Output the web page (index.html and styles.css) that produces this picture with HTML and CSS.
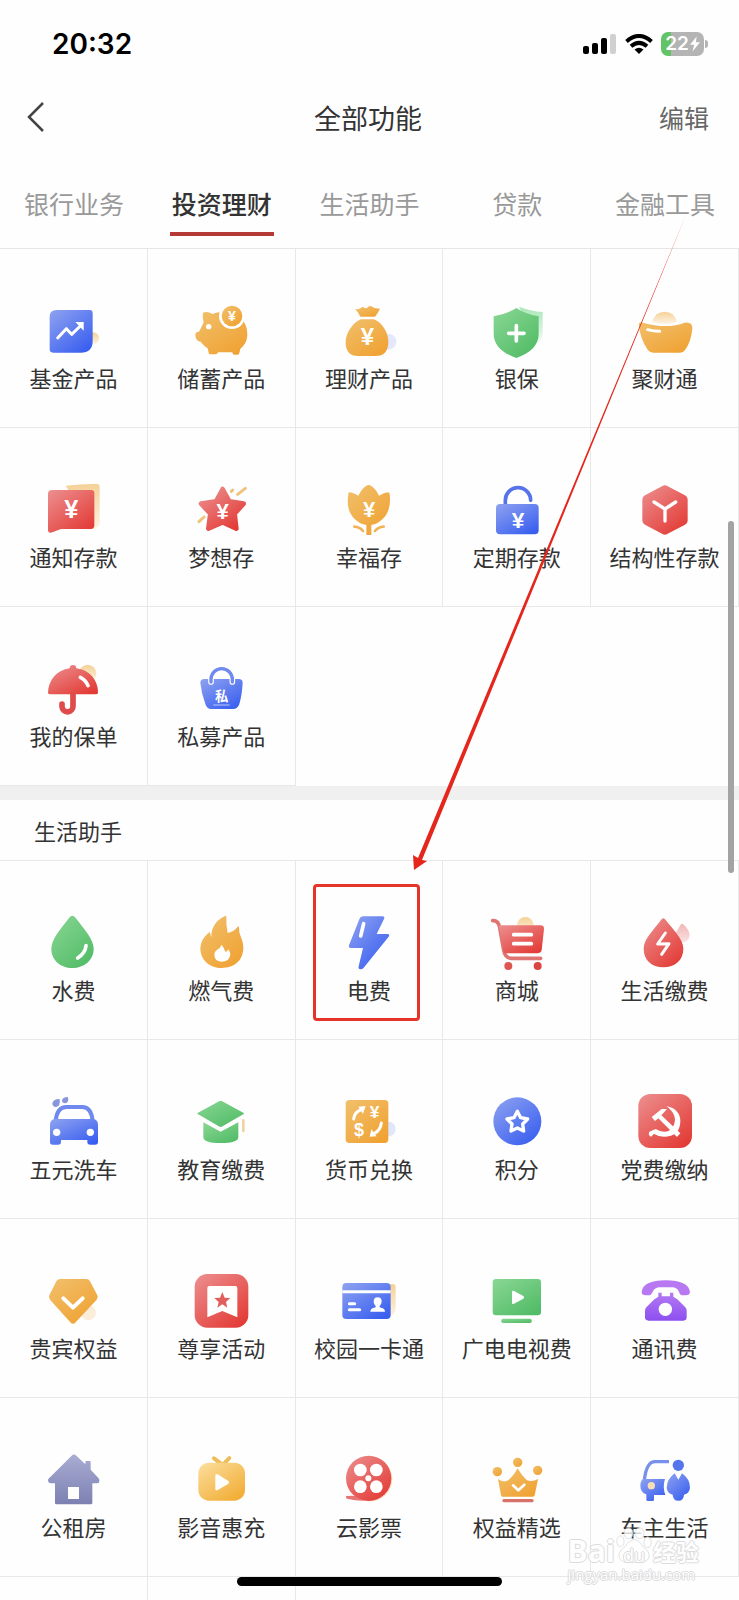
FILE: index.html
```html
<!DOCTYPE html>
<html lang="zh-CN">

<head>
  <meta charset="UTF-8">
  <meta name="viewport" content="width=device-width, initial-scale=1">
  <title>全部功能</title>
  <link rel="stylesheet" href="styles.css">
</head>

<body>
  <!-- shared gradients -->
  <svg class="defs" width="0" height="0" aria-hidden="true">
    <defs>
      <linearGradient id="blue" x1="0" y1="0" x2="0.8" y2="1"><stop offset="0" stop-color="#8fa3f0"/><stop offset="1" stop-color="#3a5ff0"/></linearGradient>
      <linearGradient id="red" x1="0" y1="0" x2="0.8" y2="1"><stop offset="0" stop-color="#ec9090"/><stop offset="1" stop-color="#e33c37"/></linearGradient>
      <linearGradient id="orange" x1="0" y1="0" x2="0.8" y2="1"><stop offset="0" stop-color="#f1c06c"/><stop offset="1" stop-color="#f0a233"/></linearGradient>
      <linearGradient id="green" x1="0" y1="0" x2="0.8" y2="1"><stop offset="0" stop-color="#8ad794"/><stop offset="1" stop-color="#52bc67"/></linearGradient>
      <linearGradient id="purple" x1="0" y1="0" x2="0" y2="1"><stop offset="0" stop-color="#b57af3"/><stop offset="1" stop-color="#8c4ff0"/></linearGradient>
      <linearGradient id="slate" x1="0" y1="0" x2="0" y2="1"><stop offset="0" stop-color="#a9acd2"/><stop offset="1" stop-color="#7c81b2"/></linearGradient>
      <linearGradient id="yellow" x1="0" y1="0" x2="0.8" y2="1"><stop offset="0" stop-color="#fbdf9f"/><stop offset="1" stop-color="#f2ad35"/></linearGradient>
      <linearGradient id="sand" x1="0" y1="0" x2="0" y2="1"><stop offset="0" stop-color="#f5d196"/><stop offset="1" stop-color="#fdf3e2"/></linearGradient>
      <linearGradient id="mint" x1="0" y1="0" x2="0" y2="1"><stop offset="0" stop-color="#a9e6b8"/><stop offset="1" stop-color="#f0fbf2"/></linearGradient>
      <linearGradient id="pink" x1="0" y1="0" x2="0" y2="1"><stop offset="0" stop-color="#f1b5b5"/><stop offset="1" stop-color="#fbe4e4"/></linearGradient>
    </defs>
  </svg>

  <div class="app">
    <div class="status-bar">
      <span class="time">20:32</span>
      <div class="status-icons">
        <svg width="34" height="20" viewBox="0 0 34 20" aria-hidden="true">
          <rect x="0" y="12" width="6" height="8" rx="2"/>
          <rect x="9" y="9" width="6" height="11" rx="2"/>
          <rect x="18" y="4" width="6" height="16" rx="2"/>
          <rect x="27" y="0" width="6" height="20" rx="2" fill="#d0d0d0"/>
        </svg>
        <svg width="28" height="20" viewBox="0 0 28 20" fill="none" stroke="#000" stroke-width="4" aria-hidden="true">
          <path d="M1.500 7.500Q14-3.500 26.500 7.500"/>
          <path d="M6 12.200Q14 5.500 22 12.200"/>
          <path d="M9.500 15.500Q14 12 18.500 15.500L14 20Z" fill="#000" stroke="none"/>
        </svg>
        <div class="battery">
          <span>22</span>
          <svg width="10" height="16" viewBox="0 0 12 18" fill="#fff" aria-hidden="true"><path d="M8 0L0 10H5L3 18L12 7H7Z"/></svg>
        </div>
      </div>
    </div>

    <header class="nav-bar">
      <button class="back" type="button" aria-label="返回">
        <svg width="18" height="32" viewBox="0 0 18 32" fill="none" stroke="#444" stroke-width="2.500"><path d="M16 2L2 16L16 30"/></svg>
      </button>
      <h1>全部功能</h1>
      <button class="edit" type="button">编辑</button>
    </header>

    <nav class="tabs">
      <a href="#">银行业务</a>
      <a href="#" class="active">投资理财</a>
      <a href="#">生活助手</a>
      <a href="#">贷款</a>
      <a href="#">金融工具</a>
    </nav>

    <main class="content">
      <section class="grid">
        <a class="item" href="#">
          <svg class="icon" viewBox="0 0 180 180"><circle cx="150" cy="109" r="18" fill="url(#sand)"/><path d="M40 24H140Q149 24 149 33V116Q149 152 113 152H30Q20 152 20 142V44Q20 24 40 24Z" fill="url(#blue)"/><path d="M44 108L70 80L86 97L112 72" class="line w9"/><path d="M97 60H122V86Z" fill="#fff"/></svg>
          <span>基金产品</span>
        </a>
        <a class="item" href="#">
          <svg class="icon" viewBox="0 0 180 180"><path d="M36 32Q50 27 64 36Q78 30 92 30C150 28 170 66 169 98C168 120 158 132 148 140L145 153Q144 158 139 158H129Q125 158 124 151H82L79 154Q78 157 74 157H58Q53 157 53 152L50 139C40 132 34 126 30 120L20 116Q12 108 13 98Q14 88 24 89C28 82 32 72 38 62Q33 45 36 32Z" fill="url(#orange)"/><circle cx="53" cy="74" r="8" fill="#fff"/><circle cx="123" cy="42" r="39" fill="#fff"/><circle cx="123" cy="42" r="31" fill="url(#orange)"/><text x="123" y="57" font-size="42">¥</text></svg>
          <span>储蓄产品</span>
        </a>
        <a class="item" href="#">
          <svg class="icon" viewBox="0 0 180 180"><circle cx="148" cy="119" r="24" fill="#e3e8fd"/><path d="M66 52H104C130 60 150 96 148 122C147 148 134 162 110 162H58C34 162 20 148 20 122C19 96 40 62 66 52Z" fill="url(#orange)"/><path d="M48 20Q57 24 64 19L72 14Q78 20 84 18Q90 10 97 13L106 18L123 20Q116 35 108 44H64Q59 32 48 20Z" fill="url(#orange)"/><text x="85" y="130" font-size="72">¥</text></svg>
          <span>理财产品</span>
        </a>
        <a class="item" href="#">
          <svg class="icon" viewBox="0 0 180 180"><path d="M96 14Q130 27 167 30V88Q167 112 152 124Z" fill="url(#mint)"/><path d="M88 18Q115 36 155 43V95C155 130 130 153 88 168C46 153 20 130 20 95V43Q61 36 88 18Z" fill="url(#green)"/><path d="M88 71V117M65 94H111" class="line w11"/></svg>
          <span>银保</span>
        </a>
        <a class="item" href="#">
          <svg class="icon" viewBox="0 0 180 180"><path d="M52 60Q60 29 89 29Q118 29 126 60Q90 70 52 60Z" fill="url(#sand)"/><path d="M11 66Q13 59 24 62Q60 72 90 72Q125 72 148 62Q173 58 172 80Q168 120 150 144Q145 152 135 152H55Q45 152 38 143Q15 110 11 66Z" fill="url(#orange)"/><path d="M38 83Q55 88 74 88" class="line w9"/></svg>
          <span>聚财通</span>
        </a>

        <a class="item" href="#">
          <svg class="icon" viewBox="0 0 180 180"><path d="M68 14Q120 8 162 9Q170 9 170 18V130Q160 144 150 144Z" fill="url(#sand)"/><path d="M27 27H144Q154 27 154 37V133Q154 144 144 144H54L28 154Q15 158 15 146V39Q15 27 27 27Z" fill="url(#red)"/><text x="85" y="111" font-size="76">¥</text></svg>
          <span>通知存款</span>
        </a>
        <a class="item" href="#">
          <svg class="icon" viewBox="0 0 180 180"><path d="M163 22L140 40M125 27L121 31M39 108L24 122" fill="none" stroke="#eec47c" stroke-width="9" stroke-linecap="round"/><path d="M95 24L115 61L158 68L131 98L136 143L95 124L52 143L58 98L30 68L75 61Z" fill="url(#red)" stroke="url(#red)" stroke-width="14" stroke-linejoin="round"/><text x="95" y="114" font-size="66">¥</text></svg>
          <span>梦想存</span>
        </a>
        <a class="item" href="#">
          <svg class="icon" viewBox="0 0 180 180"><path d="M28 39Q27 34 34 34Q46 36 58 44Q70 20 85 13Q89 11 93 13Q110 22 120 44Q132 36 146 34Q152 34 152 39Q158 90 130 115Q115 130 97 132V162H82V132Q63 130 48 115Q20 90 28 39Z" fill="url(#orange)"/><path d="M46 137Q62 138 72 150M134 137Q118 138 108 150" fill="none" stroke="#f0b355" stroke-width="8" stroke-linecap="round"/><text x="90" y="107" font-size="66">¥</text></svg>
          <span>幸福存</span>
        </a>
        <a class="item" href="#">
          <svg class="icon" viewBox="0 0 180 180"><path d="M55 75V58A38 38 0 0 1 131 58" fill="none" stroke="#5773ea" stroke-width="11" stroke-linecap="round"/><rect x="27" y="69" width="128" height="91" rx="12" fill="url(#blue)"/><text x="93" y="140" font-size="68">¥</text></svg>
          <span>定期存款</span>
        </a>
        <a class="item" href="#">
          <svg class="icon" viewBox="0 0 180 180"><path d="M81 16Q90 10 98 16L150 43Q158 47 158 55V119Q158 127 150 131L98 158Q90 164 81 158L30 131Q22 127 22 119V55Q22 47 30 43Z" fill="url(#red)"/><path d="M57 63L90 84L122 63M90 84V120" class="line w10"/></svg>
          <span>结构性存款</span>
        </a>

        <a class="item" href="#">
          <svg class="icon" viewBox="0 0 180 180"><circle cx="134" cy="40" r="26" fill="url(#sand)"/><path d="M90 100V138A16 16 0 0 1 57 140V132" fill="none" stroke="#df4b4a" stroke-width="17" stroke-linecap="round"/><path d="M80 25Q81 15 90 15Q99 15 100 25C140 30 166 62 165 98Q165 103 158 103H22Q15 103 15 98C16 60 42 30 80 25Z" fill="url(#red)"/><path d="M112 52Q128 60 135 77" class="line w11"/></svg>
          <span>我的保单</span>
        </a>
        <a class="item" href="#">
          <svg class="icon" viewBox="0 0 180 180"><path d="M28 68Q28 57 40 57H143Q155 57 155 68Q153 105 145 132Q140 147 126 147H60Q48 147 43 132Q31 100 28 68Z" fill="url(#blue)"/><path d="M60 66V58A32 32 0 0 1 124 58V66" class="line w17"/><path d="M60 66V58A32 32 0 0 1 124 58V66" fill="none" stroke="#6f89ee" stroke-width="10" stroke-linecap="round"/><text class="cjk" x="92" y="122" font-size="40">私</text><path d="M67 135H116" fill="none" stroke="#bcc8fb" stroke-width="3"/></svg>
          <span>私募产品</span>
        </a>
      </section>

      <section class="group">
        <h2>生活助手</h2>
        <div class="grid">
          <a class="item" href="#">
            <svg class="icon" viewBox="0 0 180 180"><path d="M88 5Q93 5 98 12C125 48 152 75 152 105C152 138 124 162 88 162C52 162 25 138 25 105C25 75 52 46 78 12Q83 5 88 5Z" fill="url(#green)"/><path d="M129 95Q127 118 104 132" class="line w11"/></svg>
            <span>水费</span>
          </a>
          <a class="item" href="#">
            <svg class="icon" viewBox="0 0 180 180"><path d="M101 7Q106 3 106 10Q105 35 110 57Q130 52 140 38Q144 34 144 42Q144 58 150 70Q157 85 157 100C157 140 130 162 92 162C55 162 28 138 28 102Q30 75 52 57Q57 52 58 60L61 71C60 42 74 20 101 7Z" fill="url(#orange)"/><path d="M92 92Q97 98 103 114Q109 112 112 106Q118 114 118 121Q116 143 93 143Q71 143 70 122Q71 112 80 106Q88 102 92 92Z" fill="#fff"/></svg>
            <span>燃气费</span>
          </a>
          <a class="item" href="#">
            <svg class="icon" viewBox="0 0 180 180"><path d="M73 7H130Q139 7 135 15L113 60H145Q154 60 149 68L74 161Q69 167 61 165Q57 163 59 157L72 102H36Q28 102 30 94L61 16Q64 7 73 7Z" fill="url(#blue)"/><path d="M74 29L65 66" class="line w11"/></svg>
            <span>电费</span>
            <i class="highlight"></i>
          </a>
          <a class="item" href="#">
            <svg class="icon" viewBox="0 0 180 180"><circle cx="115" cy="34" r="25" fill="url(#sand)"/><path d="M17 20Q34 19 38 40L50 108Q54 133 74 133H161" fill="none" stroke="#e07472" stroke-width="11" stroke-linecap="round"/><path d="M35 34H160Q172 34 171 46L164 108Q162 118 150 118H51Z" fill="url(#red)"/><path d="M80 62H133M80 89H133" class="line w11"/><circle cx="64" cy="156" r="12" fill="#df5552"/><circle cx="152" cy="156" r="12" fill="#d94542"/></svg>
            <span>商城</span>
          </a>
          <a class="item" href="#">
            <svg class="icon" viewBox="0 0 180 180"><path d="M138 31Q141 27 145 31Q165 50 164 65Q160 84 140 86L120 60Z" fill="url(#pink)"/><path d="M78 18Q85 8 92 18C115 48 145 75 145 104C145 138 120 160 85 160C50 160 26 138 26 104C26 75 56 48 78 18Z" fill="url(#red)"/><path d="M91 57L68 90L102 89L80 121" class="line w9"/></svg>
            <span>生活缴费</span>
          </a>

          <a class="item" href="#">
            <svg class="icon" viewBox="0 0 180 180"><path d="M28 31Q31 18 50 18Q53 41 39 42Q28 42 28 31ZM57 22Q60 12 75 12Q78 30 67 31Q57 31 57 22Z" fill="#8796dc"/><path d="M38 84Q42 42 70 42H118Q145 42 149 84" fill="none" stroke="#7089ee" stroke-width="12"/><path d="M36 78H150Q165 80 165 96V147Q165 155 157 155H142Q133 155 133 147V141H54V147Q54 155 45 155H29Q21 155 21 147V96Q21 80 36 78Z" fill="url(#blue)"/><circle cx="41" cy="118" r="11" fill="#fff"/><circle cx="142" cy="118" r="11" fill="#fff"/></svg>
            <span>五元洗车</span>
          </a>
          <a class="item" href="#">
            <svg class="icon" viewBox="0 0 180 180"><path d="M157 82V114" fill="none" stroke="#efd3a0" stroke-width="8" stroke-linecap="round"/><path d="M37 88L89 116L142 88V132Q142 150 89 150Q37 150 37 132Z" fill="url(#green)"/><path d="M83 23Q89 18 95 23L158 57Q166 61 158 66L96 102Q89 107 82 102L20 66Q12 61 20 57Z" fill="url(#green)" stroke="#fff" stroke-width="5"/></svg>
            <span>教育缴费</span>
          </a>
          <a class="item" href="#">
            <svg class="icon" viewBox="0 0 180 180"><circle cx="148" cy="108" r="22" fill="#e0e6fd"/><rect x="20" y="21" width="128" height="129" rx="11" fill="url(#orange)"/><path d="M44 78Q46 58 64 51M127 90Q124 113 106 121" class="line w9"/><path d="M58 41L80 39L72 62ZM113 130L92 131L97 109Z" fill="#fff"/><text x="60" y="130" font-size="54">$</text><text x="107" y="76" font-size="52">¥</text></svg>
            <span>货币兑换</span>
          </a>
          <a class="item" href="#">
            <svg class="icon" viewBox="0 0 180 180"><circle cx="91" cy="85" r="72" fill="url(#blue)"/><path d="M91 55L101 74L122 78L107 93L110 114L91 105L72 114L75 93L60 78L81 74Z" class="line w10"/></svg>
            <span>积分</span>
          </a>
          <a class="item" href="#">
            <svg class="icon" viewBox="0 0 180 180"><rect x="10" y="3" width="161" height="162" rx="36" fill="url(#red)"/><path d="M94 39Q136 48 136 86Q134 129 91 131Q70 131 57 122L48 131Q38 126 43 116L62 108Q95 128 114 101Q132 68 94 39Z" fill="#fff"/><path d="M50 72L80 48H96L79 67L136 121L126 132L70 76L60 84Z" fill="#fff"/></svg>
            <span>党费缴纳</span>
          </a>

          <a class="item" href="#">
            <svg class="icon" viewBox="0 0 180 180"><circle cx="136" cy="122" r="23" fill="#faeedb"/><path d="M52 21H130Q137 21 141 28L163 70Q167 77 161 83L98 151Q90 160 82 151L21 83Q15 77 19 70L40 28Q44 21 52 21Z" fill="url(#orange)"/><path d="M61 79L90 107L119 79" class="line w12"/></svg>
            <span>贵宾权益</span>
          </a>
          <a class="item" href="#">
            <svg class="icon" viewBox="0 0 180 180"><rect x="11" y="6" width="161" height="161" rx="38" fill="url(#red)"/><path d="M55 42H133Q139 42 139 48V136L94 117L49 136V48Q49 42 55 42Z" fill="#fff"/><path d="M94 60L101 77L118 78L105 90L109 107L94 97L79 107L83 90L70 78L87 77Z" fill="#e0605e"/></svg>
            <span>尊享活动</span>
          </a>
          <a class="item" href="#">
            <svg class="icon" viewBox="0 0 180 180"><path d="M150 36H160Q170 36 170 46V110Q168 128 150 134Z" fill="url(#sand)"/><rect x="10" y="33" width="145" height="108" rx="12" fill="url(#blue)"/><path d="M10 59H155" fill="none" stroke="#fff" stroke-width="9"/><path d="M31 95H47M31 113H62" class="line w9"/><path d="M116 76Q128 76 128 89Q127 98 122 102V106Q138 109 138 119H94Q94 109 110 106V102Q105 98 104 89Q104 76 116 76Z" fill="#fff"/></svg>
            <span>校园一卡通</span>
          </a>
          <a class="item" href="#">
            <svg class="icon" viewBox="0 0 180 180"><rect x="17" y="21" width="145" height="109" rx="10" fill="url(#green)"/><path d="M75 60Q75 54 81 57L109 72Q114 76 109 80L81 95Q75 98 75 92Z" fill="#fff"/><rect x="43" y="140" width="91" height="13" rx="5" fill="url(#green)"/></svg>
            <span>广电电视费</span>
          </a>
          <a class="item" href="#">
            <svg class="icon" viewBox="0 0 180 180"><path d="M20 60Q24 25 92 25Q160 25 165 60Q164 70 152 70H140Q134 68 131 58Q126 47 112 46H74Q59 47 54 58Q50 68 44 70H33Q20 70 20 60Z" fill="#b778f2"/><path d="M70 62H80V73H105V62H115V74Q121 77 127 82L151 106Q155 110 155 116V136Q155 146 145 146H41Q30 146 30 136V116Q30 110 34 106L58 82Q64 77 70 74Z" fill="url(#purple)"/><circle cx="91" cy="112" r="20" fill="#fff"/></svg>
            <span>通讯费</span>
          </a>

          <a class="item" href="#">
            <svg class="icon" viewBox="0 0 180 180"><path d="M86 14Q93 7 100 14L127 40V34Q127 30 131 30H139Q143 30 143 34V56L167 82Q172 88 168 95Q165 97 148 97V156Q148 160 144 160H40Q36 160 36 156V97Q22 97 18 95Q12 88 18 82ZM75 108V144H108V108Z" fill="url(#slate)" fill-rule="evenodd"/></svg>
            <span>公租房</span>
          </a>
          <a class="item" href="#">
            <svg class="icon" viewBox="0 0 180 180"><path d="M69 22L90 38M115 21L99 38" fill="none" stroke="#eebd57" stroke-width="12" stroke-linecap="round"/><rect x="22" y="35" width="140" height="114" rx="32" fill="url(#yellow)"/><path d="M73 74Q73 66 80 70L111 89Q117 94 111 99L80 117Q73 121 73 113Z" fill="#fff"/></svg>
            <span>影音惠充</span>
          </a>
          <a class="item" href="#">
            <svg class="icon" viewBox="0 0 180 180"><path d="M22 135Q60 130 90 148Q60 152 24 143Q18 140 22 135Z" fill="#e77472"/><circle cx="93" cy="84" r="67" fill="#f8dfc0"/><circle cx="89" cy="82" r="68" fill="url(#red)"/><g fill="#fff"><circle cx="64" cy="57" r="19"/><circle cx="112" cy="57" r="19"/><circle cx="64" cy="107" r="19"/><circle cx="112" cy="107" r="19"/><circle cx="88" cy="82" r="9"/></g></svg>
            <span>云影票</span>
          </a>
          <a class="item" href="#">
            <svg class="icon" viewBox="0 0 180 180"><g fill="url(#orange)"><circle cx="31" cy="62" r="14"/><circle cx="92" cy="34" r="14"/><circle cx="152" cy="58" r="14"/><path d="M33 84Q50 96 64 88Q78 76 92 52Q106 76 120 88Q136 94 153 84Q148 110 143 133Q142 137 138 137H47Q43 137 42 133Z"/></g><path d="M78 103L94 118L112 101" class="line w8"/><path d="M51 149H135" fill="none" stroke="#d9716b" stroke-width="10" stroke-linecap="round"/></svg>
            <span>权益精选</span>
          </a>
          <a class="item" href="#">
            <svg class="icon" viewBox="0 0 180 180"><path d="M28 88Q34 34 58 32H102" fill="none" stroke="#7791ea" stroke-width="10"/><path d="M24 84H90Q82 108 91 132H57V146Q57 150 53 150H38Q34 150 34 146V130Q16 124 16 104Q16 90 24 84Z" fill="url(#blue)"/><circle cx="49" cy="104" r="11" fill="#f8dfb8"/><circle cx="130" cy="43" r="17" fill="#5575ec"/><path d="M119 67L130 86L141 67Q165 84 165 110Q164 126 147 131Q146 149 130 149Q114 149 113 131Q96 126 95 110Q96 84 119 67Z" fill="url(#blue)"/></svg>
            <span>车主生活</span>
          </a>

          <div class="item"></div>
          <div class="item"></div>
        </div>
      </section>
    </main>

    <div class="scrollbar"></div>
    <svg class="arrow" viewBox="0 0 280 660" aria-hidden="true"><path d="M276 0L8 643L3 640L4 655L17 646L12 645Z" fill="#e5261c"/></svg>
    <div class="watermark">
      <div class="brand">
        <span>Bai</span>
        <span class="paw">
          <svg width="38" height="42" viewBox="0 0 42 42" fill="#fff" stroke="#d6d6d6" aria-hidden="true"><ellipse cx="6" cy="17" rx="4" ry="6"/><ellipse cx="15" cy="8" rx="5" ry="6"/><ellipse cx="27" cy="8" rx="5" ry="6"/><ellipse cx="36" cy="18" rx="4" ry="6"/><path d="M21 15Q26 15 31 23Q40 29 37 36Q33 42 21 40Q9 42 5 36Q2 29 11 23Q16 15 21 15Z"/></svg>
          <b>du</b>
        </span>
        <span class="cn">经验</span>
      </div>
      <div class="site">jingyan.baidu.com</div>
    </div>
    <div class="home-indicator"></div>
  </div>
</body>

</html>
```
FILE: styles.css
```css
* {
  box-sizing: border-box;
}

body {
  margin: 0;
  background-color: #fefefe;
  color: #333;
  font-family: "Noto Sans CJK SC", sans-serif;
}

a {
  color: inherit;
  text-decoration: none;
}

button {
  padding: 0;
  border: 0;
  background: none;
  font-family: inherit;
}

.defs {
  position: absolute;
}

.app {
  position: relative;
  display: flex;
  flex-direction: column;
  height: 100vh;
  overflow: hidden;
}

/* status bar */
.status-bar {
  display: flex;
  flex: none;
  align-items: center;
  justify-content: space-between;
  height: 88px;
  padding: 0 30px 0 52px;
}

.time {
  color: #000;
  font-family: Inter, sans-serif;
  font-size: 28px;
  font-weight: 600;
}

.status-icons {
  display: flex;
  align-items: center;
  gap: 8px;
}

.battery {
  position: relative;
  display: flex;
  align-items: center;
  justify-content: center;
  gap: 1px;
  width: 43px;
  height: 24px;
  margin-right: 5px;
  border-radius: 7px;
  background: linear-gradient(to right, #62c466 24%, #b4b4b4 24%);
  color: #fff;
  font-family: Inter, sans-serif;
  font-size: 19px;
  font-weight: 600;
  line-height: 24px;
}

.battery::after {
  content: "";
  position: absolute;
  top: 8px;
  right: -4px;
  width: 3px;
  height: 8px;
  border-radius: 0 3px 3px 0;
  background-color: #b4b4b4;
}

/* title */
.nav-bar {
  display: grid;
  flex: none;
  grid-template-columns: 1fr auto 1fr;
  align-items: center;
  height: 58px;
  padding: 0 30px 0 27px;
}

.nav-bar h1 {
  margin: 0;
  font-size: 27px;
  font-weight: 400;
}

.back {
  justify-self: start;
  line-height: 0;
}

.edit {
  justify-self: end;
  color: #666;
  font-size: 25px;
}

/* tabs */
.tabs {
  display: grid;
  flex: none;
  grid-template-columns: repeat(5, 1fr);
  justify-items: center;
  height: 103px;
  padding-top: 34px;
  border-bottom: 1px solid #e6e6e6;
  color: #999;
  font-size: 25px;
  line-height: 46px;
}

.tabs a {
  height: 56px;
  padding: 0 2px;
}

.tabs .active {
  border-bottom: 4px solid #b53a35;
  color: #333;
  font-weight: 500;
}

/* function grid */
.content {
  flex: 1;
  min-height: 0;
  overflow: hidden;
}

.grid {
  display: grid;
  grid-template-columns: repeat(5, 1fr);
  grid-auto-rows: 179px;
}

.item {
  position: relative;
  display: flex;
  flex-direction: column;
  align-items: center;
  padding-top: 53px;
  border-right: 1px solid #e8e8e8;
  border-bottom: 1px solid #e8e8e8;
  font-size: 22px;
  line-height: 30px;
}

.icon {
  flex: none;
  width: 60px;
  height: 60px;
}

.icon text {
  fill: #fff;
  font-family: "Liberation Sans", sans-serif;
  font-weight: 700;
  text-anchor: middle;
}

.icon .cjk {
  font-family: "Noto Sans CJK SC", sans-serif;
}

.line {
  fill: none;
  stroke: #fff;
  stroke-linecap: round;
  stroke-linejoin: round;
}

.w8 { stroke-width: 8px; }
.w9 { stroke-width: 9px; }
.w10 { stroke-width: 10px; }
.w11 { stroke-width: 11px; }
.w12 { stroke-width: 12px; }
.w17 { stroke-width: 17px; }

.group {
  border-top: 14px solid #f0f0f0;
}

.group h2 {
  margin: 0;
  padding: 0 34px;
  border-bottom: 1px solid #e8e8e8;
  font-size: 22px;
  font-weight: 400;
  line-height: 60px;
}

/* overlays */
.highlight {
  position: absolute;
  top: 23px;
  right: 22px;
  bottom: 18px;
  left: 17px;
  border: 3px solid #e5352b;
  border-radius: 4px;
}

.arrow {
  position: absolute;
  top: 215px;
  left: 410px;
  width: 280px;
  height: 660px;
  pointer-events: none;
}

.scrollbar {
  position: absolute;
  top: 521px;
  right: 5px;
  width: 6px;
  height: 352px;
  border-radius: 3px;
  background-color: #a3a3a3;
}

.home-indicator {
  position: absolute;
  bottom: 14px;
  left: 50%;
  width: 265px;
  height: 9px;
  margin-left: -133px;
  border-radius: 5px;
  background-color: #000;
}

.watermark {
  position: absolute;
  right: 40px;
  bottom: 18px;
  color: #fff;
  font-family: "Open Sans", sans-serif;
  opacity: 0.8;
  text-shadow: 1px 0 #d4d4d4, -1px 0 #d4d4d4, 0 1px #d4d4d4, 0 -1px #d4d4d4;
}

.brand {
  display: flex;
  align-items: flex-end;
  font-size: 30px;
  font-weight: 700;
  line-height: 30px;
}

.brand .cn {
  font-family: "Noto Sans CJK SC", sans-serif;
  font-size: 23px;
}

.paw {
  position: relative;
  height: 42px;
}

.paw b {
  position: absolute;
  right: 0;
  bottom: 2px;
  left: 0;
  font-size: 18px;
  font-weight: 400;
  line-height: 18px;
  text-align: center;
}

.site {
  font-size: 15px;
  line-height: 16px;
}
```
